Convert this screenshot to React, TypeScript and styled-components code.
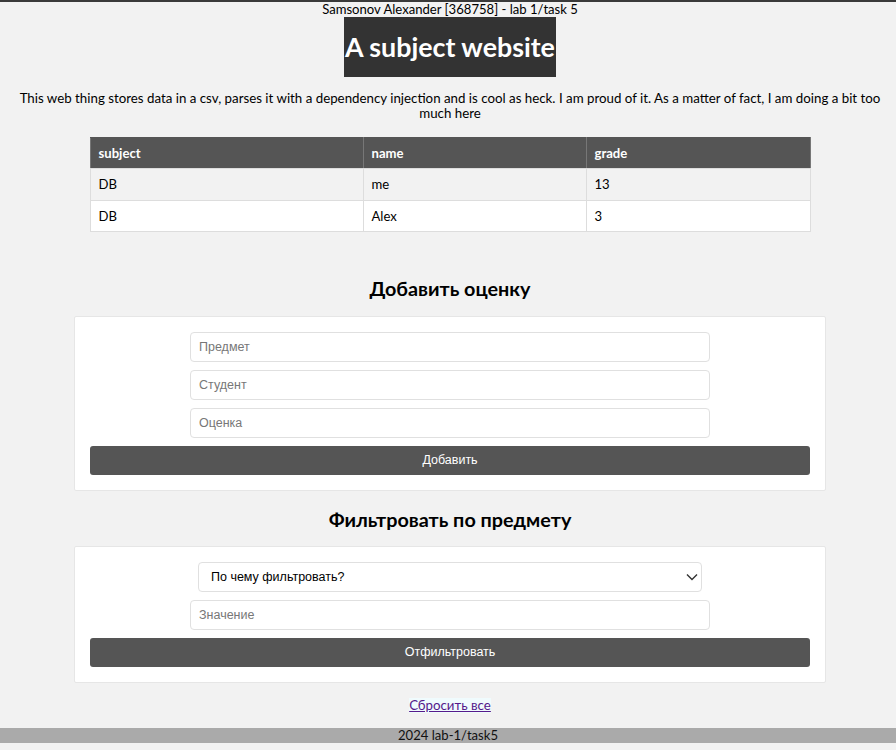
import React from "react";
import styled, { createGlobalStyle } from "styled-components";

const Global = createGlobalStyle`
  html, body { margin: 0; padding: 0; }
  body {
    background: #f2f2f2;
    font-family: "Lato", "Liberation Sans", sans-serif;
    font-size: 13.1px;
    color: #000;
    border-top: 2px solid #3a3a3a;
  }
`;

const Page = styled.div`
  display: flex;
  flex-direction: column;
  align-items: center;
  padding-left: 4px;
`;

const TopLine = styled.div`
  font-size: 13.1px;
  line-height: 15px;
  text-align: center;
`;

const Title = styled.h1`
  margin: 0;
  background: #333;
  color: #fff;
  font-size: 26.8px;
  font-weight: 700;
  line-height: 60px;
  padding: 0 1px;
`;

const Intro = styled.p`
  margin: 14px 8px 16px;
  text-align: center;
  line-height: 15px;
  font-size: 13.3px;
`;

const Table = styled.table`
  width: 720px;
  table-layout: fixed;
  border-collapse: collapse;
  background: #fff;
`;

const Col = styled.col<{ $w: number }>`
  width: ${(p) => p.$w}px;
`;

const Th = styled.th`
  background: #555;
  color: #fff;
  text-align: left;
  font-weight: 700;
  padding: 8px 8px;
  line-height: 14px;
  border: 1px solid #777;
  border-top-color: #555;
  border-bottom-color: #ddd;
`;

const Tr = styled.tr<{ $alt?: boolean }>`
  background: ${(p) => (p.$alt ? "#f2f2f2" : "#fff")};
`;

const Td = styled.td<{ $lh: number }>`
  padding: 8px 8px;
  line-height: ${(p) => p.$lh}px;
  border: 1px solid #ddd;
`;

const SectionTitle = styled.h2<{ $top: number }>`
  margin: ${(p) => p.$top}px 0 0;
  font-size: 19.8px;
  line-height: 24px;
  font-weight: 700;
  text-align: center;
`;

const Card = styled.form<{ $top: number }>`
  margin-top: ${(p) => p.$top}px;
  width: 752px;
  box-sizing: border-box;
  background: #fff;
  border: 1px solid #e6e6e6;
  border-radius: 2px;
  padding: 15px;
  display: flex;
  flex-direction: column;
  align-items: center;
  gap: 8px;
`;

const Field = styled.input`
  width: 520px;
  height: 30px;
  box-sizing: border-box;
  border: 1px solid #e0e0e0;
  border-radius: 4px;
  padding: 0 8px;
  font-family: "Liberation Sans", Arial, sans-serif;
  font-size: 12.5px;
  color: #000;
  background: #fff;
  outline: none;
  &::placeholder { color: #777; }
`;

const SelectWrap = styled.div`
  position: relative;
  width: 504px;
  height: 30px;
`;

const Select = styled.select`
  width: 100%;
  height: 30px;
  box-sizing: border-box;
  appearance: none;
  -webkit-appearance: none;
  border: 1px solid #e0e0e0;
  border-radius: 4px;
  padding: 0 12px;
  font-family: "Liberation Sans", Arial, sans-serif;
  font-size: 12.5px;
  color: #000;
  background: #fff;
  outline: none;
`;

const Chevron = styled.svg`
  position: absolute;
  right: 3px;
  top: 10px;
  pointer-events: none;
`;

const Button = styled.button`
  width: 720px;
  height: 29px;
  border: none;
  border-radius: 3px;
  background: #555;
  color: #fff;
  font-family: "Liberation Sans", Arial, sans-serif;
  font-size: 12.5px;
  line-height: 27px;
  padding: 0;
  cursor: pointer;
`;

const ResetLink = styled.a`
  margin-top: 15px;
  color: #551a8b;
  background: #f0fbfd;
  text-decoration: underline;
  font-size: 13.3px;
  line-height: 15px;
`;

const Footer = styled.footer`
  margin-top: 15px;
  width: calc(100% + 4px);
  margin-left: -4px;
  background: #aaa;
  text-align: center;
  font-size: 13.1px;
  line-height: 15px;
  color: #111;
`;

const Spacer = styled.div`
  height: 7px;
`;

const rows = [
  { subject: "DB", name: "me", grade: "13", lh: 15 },
  { subject: "DB", name: "Alex", grade: "3", lh: 14 },
];

export default function App() {
  return (
    <>
      <Global />
      <Page>
        <TopLine>Samsonov Alexander [368758] - lab 1/task 5</TopLine>
        <Title>A subject website</Title>
        <Intro>
          This web thing stores data in a csv, parses it with a dependency injection and is cool as heck. I am
          proud of it. As a matter of fact, I am doing a bit too much here
        </Intro>
        <Table>
          <colgroup>
            <Col $w={273} />
            <Col $w={223} />
            <Col $w={224} />
          </colgroup>
          <thead>
            <tr>
              <Th>subject</Th>
              <Th>name</Th>
              <Th>grade</Th>
            </tr>
          </thead>
          <tbody>
            {rows.map((r, i) => (
              <Tr key={i} $alt={i % 2 === 0}>
                <Td $lh={r.lh}>{r.subject}</Td>
                <Td $lh={r.lh}>{r.name}</Td>
                <Td $lh={r.lh}>{r.grade}</Td>
              </Tr>
            ))}
          </tbody>
        </Table>
        <SectionTitle $top={44}>Добавить оценку</SectionTitle>
        <Card $top={16} onSubmit={(e) => e.preventDefault()}>
          <Field placeholder="Предмет" />
          <Field placeholder="Студент" />
          <Field placeholder="Оценка" />
          <Button type="submit">Добавить</Button>
        </Card>
        <SectionTitle $top={16}>Фильтровать по предмету</SectionTitle>
        <Card $top={15} onSubmit={(e) => e.preventDefault()}>
          <SelectWrap>
            <Select defaultValue="">
              <option value="">По чему фильтровать?</option>
              <option value="subject">subject</option>
              <option value="name">name</option>
              <option value="grade">grade</option>
            </Select>
            <Chevron width="14" height="10" viewBox="0 0 14 10">
              <path d="M2 2.5 L7 7.5 L12 2.5" fill="none" stroke="#333" strokeWidth="1.4" />
            </Chevron>
          </SelectWrap>
          <Field placeholder="Значение" />
          <Button type="submit">Отфильтровать</Button>
        </Card>
        <ResetLink href="#">Сбросить все</ResetLink>
        <Footer>2024 lab-1/task5</Footer>
        <Spacer />
      </Page>
    </>
  );
}
